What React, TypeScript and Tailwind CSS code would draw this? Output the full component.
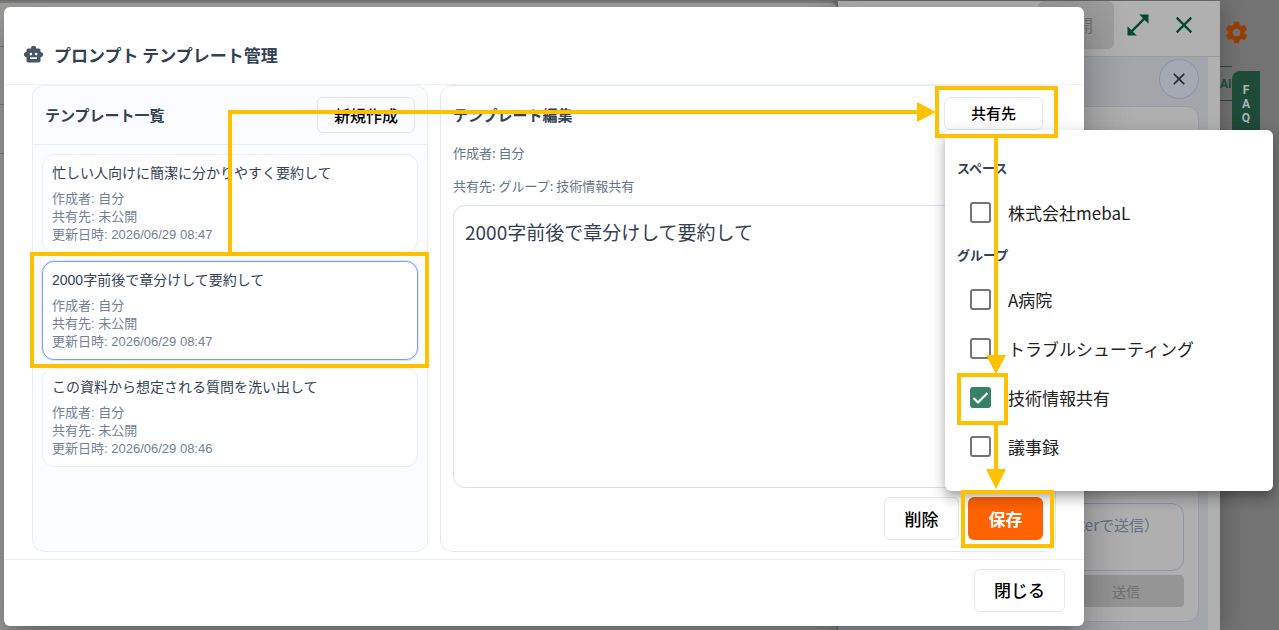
import React, { useState } from 'react';
import { MdClose, MdOpenInFull, MdSettings, MdSmartToy } from 'react-icons/md';

interface Template {
    id: number;
    title: string;
    updatedAt: string;
}

const TEMPLATES: Template[] = [
    { id: 1, title: '忙しい人向けに簡潔に分かりやすく要約して', updatedAt: '2026/06/29 08:47' },
    { id: 2, title: '2000字前後で章分けして要約して', updatedAt: '2026/06/29 08:47' },
    { id: 3, title: 'この資料から想定される質問を洗い出して', updatedAt: '2026/06/29 08:46' },
];

const SHARE_TARGETS = [
    { label: 'スペース', options: ['株式会社mebaL'] },
    { label: 'グループ', options: ['A病院', 'トラブルシューティング', '技術情報共有', '議事録'] },
];

// Chat drawer and side menu behind the dialog, already dimmed by the backdrop
const Background: React.FC = () => (
    <div className="flex min-h-screen bg-[#737373] pt-px">
        <div className="w-[838px] shrink-0 rounded-tr-lg border-t-2 border-r border-[#7d7f7d] bg-[#a0a09e]">
            <div className="mt-[43px] h-[59px] w-full border-y border-[#858583]" />
            <div className="h-[49px] w-full border-b border-[#858583]" />
        </div>
        <div className="flex min-w-0 flex-1 flex-col bg-[#b0b0b0] shadow-[0_0_24px_rgba(0,0,0,0.3)]">
            <div className="flex h-[56px] items-start justify-end border-b border-[#9c9c9c] pr-3">
                <button type="button" disabled className="mr-0.5 h-12 w-[76px] rounded-md bg-[#9d9d9d] text-[17px] text-[#747474]">公開</button>
                <button type="button" aria-label="拡大" className="flex h-12 w-11 items-center justify-center text-[#044a30]">
                    <MdOpenInFull size={28} />
                </button>
                <button type="button" aria-label="閉じる" className="flex size-12 items-center justify-center text-[#044a30]">
                    <MdClose size={28} />
                </button>
            </div>
            <div className="mr-3 flex flex-1 flex-col bg-[#a3a5aa]">
                <div className="flex h-[49px] items-start justify-end pt-0.5 pr-[9px]">
                    <button type="button" aria-label="チャットを閉じる" className="flex size-10 items-center justify-center rounded-full border border-[#8695ad] bg-[#a4a8b0] text-[#1f2937]">
                        <MdClose size={20} />
                    </button>
                </div>
                <div className="mr-[9px] mb-2 flex flex-1 flex-col justify-end gap-1 rounded-xl border border-[#989ca5] bg-[#afafaf] p-[14px]">
                    <div className="flex h-[68px] justify-end rounded-xl border border-[#8c95a3] px-6 pt-[10px] text-[15px] text-[#667083]">
                        Enterで送信）
                    </div>
                    <button type="button" disabled className="h-8 self-end rounded bg-[#959595] pr-11 pl-32 text-[14px] text-[#707070]">送信</button>
                </div>
            </div>
        </div>
        <div className="flex w-[59px] shrink-0 flex-col pt-[18px]">
            <button type="button" aria-label="設定" className="ml-[3px] self-start text-[#943e05]">
                <MdSettings size={27} />
            </button>
            <div className="mt-5 flex">
                <div className="h-[35px] w-3 border-y border-[#1a4937] font-['Roboto',sans-serif] text-[12px] leading-[35px] font-bold text-[#1a4937]">AI</div>
                <a href="#faq" className="mt-[5px] flex h-24 w-7 flex-col items-center rounded-tl-lg bg-[#1e4a39] pt-3 font-['Roboto',sans-serif] text-[12px] leading-[14px] font-bold text-[#a9b5b0]">
                    <span>F</span>
                    <span>A</span>
                    <span>Q</span>
                </a>
            </div>
        </div>
    </div>
);

const ShareMenu: React.FC = () => {
    const [checked, setChecked] = useState<string[]>(['技術情報共有']);

    const toggle = (name: string) => {
        setChecked(prev => prev.includes(name) ? prev.filter(n => n !== name) : [...prev, name]);
    };

    return (
        <div className="absolute top-full left-px z-10 w-[328px] rounded-md bg-white py-5 shadow-[0_5px_6px_-3px_rgba(0,0,0,0.2),0_9px_12px_1px_rgba(0,0,0,0.14),0_3px_16px_2px_rgba(0,0,0,0.12)]">
            {SHARE_TARGETS.map(group => (
                <fieldset key={group.label}>
                    <legend className="flex h-[38px] items-center px-3 pb-0.5 text-[13px] font-bold text-[#334155]">{group.label}</legend>
                    {group.options.map(name => (
                        <label key={name} className="flex h-[49px] items-center gap-[17px] pl-[25px] text-[17px] text-[#212121]">
                            <span className="relative flex size-[21px]">
                                <input
                                    type="checkbox"
                                    checked={checked.includes(name)}
                                    onChange={() => toggle(name)}
                                    className="peer size-full appearance-none rounded-[3px] border-2 border-[#757575] checked:border-[#388066] checked:bg-[#388066]"
                                />
                                <svg viewBox="0 0 21 21" className="pointer-events-none absolute inset-0 hidden peer-checked:block" fill="none" stroke="white" strokeWidth="2.2">
                                    <path d="M3.5 11 L8 15.5 L17.5 6" />
                                </svg>
                            </span>
                            {name}
                        </label>
                    ))}
                </fieldset>
            ))}
        </div>
    );
};

// Step markers drawn over the screen
const Guide: React.FC = () => (
    <svg width="1279" height="630" className="pointer-events-none absolute top-0 left-0 z-20" fill="none" stroke="#ffc000" strokeWidth="4">
        <rect x="32" y="254" width="395" height="112" />
        <path d="M230 254 V112 H920" />
        <rect x="937" y="88" width="119" height="48" />
        <path d="M996 138 V358" />
        <rect x="959" y="375" width="47" height="48" />
        <path d="M996 425 V472" />
        <rect x="963" y="492" width="89" height="54" />
        <g fill="#ffc000" stroke="none">
            <path d="M917 102 L936 112 L917 122 Z" />
            <path d="M986 355 H1006 L996 374 Z" />
            <path d="M986 469 H1006 L996 489 Z" />
        </g>
    </svg>
);

const App: React.FC = () => {
    const [selectedId, setSelectedId] = useState(2);
    const [body, setBody] = useState('2000字前後で章分けして要約して');

    return (
        <div className="relative min-h-screen overflow-hidden font-['Noto_Sans_CJK_JP',sans-serif]">
            <Background />

            <div className="absolute inset-0 flex pt-[7px] pr-[195px] pb-1 pl-1">
                <div role="dialog" aria-labelledby="dialog-title" className="flex min-w-0 flex-1 flex-col rounded-md bg-white shadow-[0_11px_15px_-7px_rgba(0,0,0,0.2),0_24px_38px_3px_rgba(0,0,0,0.14),0_9px_46px_8px_rgba(0,0,0,0.12)]">
                    <header className="flex h-[78px] items-center gap-[10px] border-b border-[#edf2f7] px-[19px] pt-[18px]">
                        <MdSmartToy size={21} className="text-[#475569]" />
                        <h1 id="dialog-title" className="text-[17px] font-bold text-[#334155]">プロンプト テンプレート管理</h1>
                    </header>

                    <main className="flex min-h-0 flex-1 gap-3 px-7 pb-[7px]">
                        <section className="w-[396px] shrink-0 rounded-xl border border-[#e9eff7] bg-[#fafcff]">
                            <div className="flex h-[59px] items-center justify-between border-b border-[#e9eff7] px-3">
                                <h2 className="text-[15px] font-bold text-[#334155]">テンプレート一覧</h2>
                                <button type="button" className="h-9 rounded-md border border-[#e5e7eb] bg-[#fcfdff] px-4 text-[16px] font-medium text-black">新規作成</button>
                            </div>
                            <div className="flex flex-col gap-2 p-[9px]">
                                {TEMPLATES.map(t => (
                                    <button
                                        key={t.id}
                                        type="button"
                                        onClick={() => setSelectedId(t.id)}
                                        className={`rounded-xl border bg-white px-[9px] py-2 text-left font-['Liberation_Sans','Noto_Sans_CJK_JP',sans-serif] ${t.id === selectedId ? 'border-[#7da2e8] shadow-[0_0_0_1px_#dbe6fb]' : 'border-[#e9eff7]'}`}
                                    >
                                        <span className="mb-[7px] block text-sm leading-5 text-[#334155]">{t.title}</span>
                                        <span className="block text-[13px] leading-[18px] text-[#728197]">作成者: 自分</span>
                                        <span className="block text-[13px] leading-[18px] text-[#728197]">共有先: 未公開</span>
                                        <span className="block text-[13px] leading-[18px] text-[#728197]">更新日時: {t.updatedAt}</span>
                                    </button>
                                ))}
                            </div>
                        </section>

                        <section className="flex min-w-0 flex-1 flex-col rounded-xl border border-[#e2e8f0] px-3 py-[11px]">
                            <div className="flex h-9 shrink-0 items-start justify-between">
                                <h2 className="text-[15px] leading-9 font-bold text-[#334155]">テンプレート編集</h2>
                                <div className="relative">
                                    <button type="button" aria-expanded="true" className="block h-[33px] w-[99px] rounded-md border border-[#e5e7eb] text-[15px] font-medium text-black">共有先</button>
                                    <ShareMenu />
                                </div>
                            </div>
                            <p className="mt-[10px] text-[13px] leading-5 text-[#64748b]">作成者: 自分</p>
                            <p className="mt-[13px] text-[13px] leading-5 text-[#64748b]">共有先: グループ: 技術情報共有</p>
                            <textarea
                                aria-label="テンプレート本文"
                                value={body}
                                onChange={e => setBody(e.target.value)}
                                className="mt-[9px] min-h-0 flex-1 resize-none rounded-xl border border-[#d8e0ea] px-[11px] py-3 text-[19px] leading-7 text-[#334155] outline-none"
                            />
                            <div className="mt-[9px] flex shrink-0 justify-end gap-[9px]">
                                <button type="button" className="h-[43px] w-[75px] rounded-md border border-[#e5e7eb] text-[17px] font-medium text-black">削除</button>
                                <button type="button" className="h-[43px] w-[75px] rounded-md bg-[#ff6200] text-[17px] font-bold text-white">保存</button>
                            </div>
                        </section>
                    </main>

                    <footer className="flex h-[67px] items-center justify-end border-t border-[#f1f2f4] px-[19px] pb-[6px]">
                        <button type="button" className="h-[43px] w-[91px] rounded-md border border-[#e5e7eb] text-[17px] font-medium text-black">閉じる</button>
                    </footer>
                </div>
            </div>

            <Guide />
        </div>
    );
};

export default App;
